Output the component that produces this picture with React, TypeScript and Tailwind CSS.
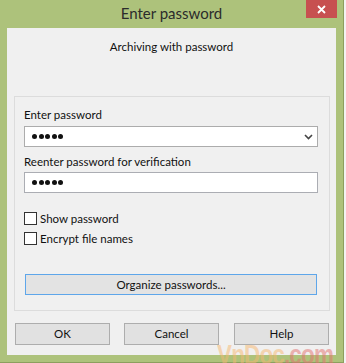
import React from "react";

const Dots = () => (
  <div className="flex items-center gap-[1.5px] pl-[7px]">
    {[0, 1, 2, 3, 4].map((i) => (
      <div key={i} className="w-[5px] h-[5px] rounded-full bg-[#111]" />
    ))}
  </div>
);

const Check = ({ label }: { label: string }) => (
  <div className="flex items-center h-[13px]">
    <div className="w-[13px] h-[13px] border border-[#333] bg-white" />
    <span className="ml-[3px] leading-[16px]">{label}</span>
  </div>
);

export default function App() {
  return (
    <div
      className="w-[346px] h-[363px] bg-[#f2f2f2] flex overflow-hidden relative text-[11.5px] text-[#111]"
      style={{ fontFamily: "Lato, 'Liberation Sans', sans-serif" }}
    >
      <div className="w-[344px] h-[363px] bg-[#adc27b] border-r border-b border-[#8c9f5e] flex flex-col shrink-0">
        <div className="h-[28px] grid grid-cols-[1fr_auto_1fr]">
          <div />
          <div className="text-[15px] leading-[18px] pt-[4px] text-[#2b2b2b]">Enter password</div>
          <div className="flex justify-end pr-[6px]">
            <div className="w-[31px] h-[18px] bg-[#c75050] flex items-center justify-center">
              <svg width="9" height="9" viewBox="0 0 9 9">
                <path d="M1 1 L8 8 M8 1 L1 8" stroke="white" strokeWidth="1.8" />
              </svg>
            </div>
          </div>
        </div>
        <div className="ml-[7px] w-[329px] h-[327px] bg-[#f0f0f0] flex flex-col">
          <div className="pt-[11px] h-[27px] leading-[16px] text-center">Archiving with password</div>
          <div className="mt-[41px] ml-[7px] w-[316px] h-[215px] border border-[#dcdcdc] flex flex-col pl-[9px]">
            <div className="pt-[10px] leading-[16px] h-[26px]">Enter password</div>
            <div className="mt-[3px] w-[294px] h-[21px] bg-white border border-[#acacac] flex items-center justify-between">
              <Dots />
              <svg width="9" height="6" viewBox="0 0 9 6" className="mr-[4px]">
                <path d="M1 1 L4.5 4.5 L8 1" stroke="#444" strokeWidth="1.6" fill="none" />
              </svg>
            </div>
            <div className="mt-[7px] leading-[16px] h-[16px]">Reenter password for verification</div>
            <div className="mt-[2px] w-[294px] h-[21px] bg-white border border-[#abadb3] flex items-center">
              <Dots />
            </div>
            <div className="mt-[19px]">
              <Check label="Show password" />
            </div>
            <div className="mt-[7px]">
              <Check label="Encrypt file names" />
            </div>
            <div className="mt-[29px] ml-[1px] w-[292px] h-[21px] bg-[#e3e3e3] border border-[#5ea6ea] flex items-center justify-center leading-[16px]">
              Organize passwords...
            </div>
          </div>
          <div className="mt-[12px] ml-[8px] flex">
            <div className="w-[95px] h-[22px] bg-[#e1e1e1] border border-[#adadad] flex items-center justify-center">OK</div>
            <div className="ml-[14px] w-[95px] h-[22px] bg-[#e1e1e1] border border-[#adadad] flex items-center justify-center">Cancel</div>
            <div className="ml-[15px] w-[95px] h-[22px] bg-[#e1e1e1] border border-[#adadad] flex items-center justify-center">Help</div>
          </div>
        </div>
      </div>
      <div
        className="absolute left-[217px] top-[341px] text-[28px] font-bold leading-[28px] tracking-[-1px] opacity-50 pointer-events-none origin-left scale-x-[0.8] whitespace-nowrap"
        style={{ fontFamily: "'Liberation Sans', sans-serif" }}
      >
        <span className="text-[#f6b870]">VnDoc</span>
        <span className="text-[#e4716f]">.com</span>
      </div>
    </div>
  );
}
